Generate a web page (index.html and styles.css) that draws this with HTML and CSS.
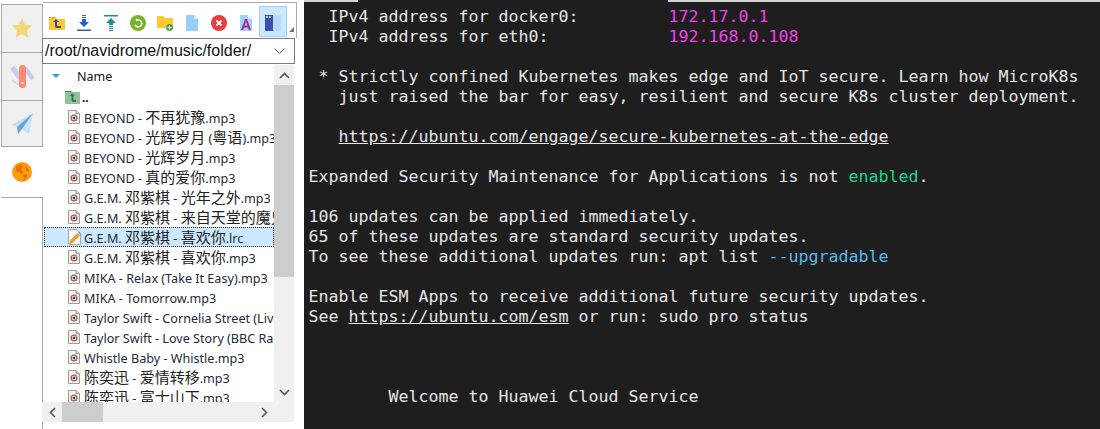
FILE: index.html
```html
<!DOCTYPE html>
<html lang="zh">
<head>
<meta charset="utf-8">
<title>Terminal</title>
<link rel="stylesheet" href="styles.css">
</head>
<body>
<svg class="defs" width="0" height="0" aria-hidden="true">
  <symbol id="mp3" viewBox="0 0 12 14">
    <path d="M.5.5h7.500l3.500 3v10h-11z" fill="#f2f2f2" stroke="#9a9a9a"/>
    <path d="M8 .5v3h3.500" fill="#ddd" stroke="#9a9a9a"/>
    <circle cx="6" cy="8" r="3.500" fill="#a8604a"/>
    <circle cx="6" cy="8" r="2.200" fill="#e8e4e0"/>
    <circle cx="6" cy="8" r="1.200" fill="#2f2f3a"/>
  </symbol>
</svg>
<div class="app">
  <nav class="side">
    <div class="tab">
      <svg width="22" height="21" viewBox="0 0 24 23"><path d="M12 0l3.300 7.400 8 .8-6 5.400 1.700 7.900-7-4.100-7 4.100 1.700-7.900-6-5.400 8-.8z" fill="#f2d777"/></svg>
    </div>
    <div class="tab">
      <svg width="23" height="23" viewBox="0 0 23 23"><path d="M1 2l8 11" stroke="#c8cdf0" stroke-width="5"/><path d="M1 15l7 5" stroke="#d4d8f2" stroke-width="2"/><path d="M14 3l8 11" stroke="#c8cdf0" stroke-width="4.500"/><rect x="8" y="0" width="7" height="23" rx="3.500" fill="#f98b70"/><circle cx="11.500" cy="18" r="1" fill="#fff"/></svg>
    </div>
    <div class="tab">
      <svg width="22" height="22" viewBox="0 0 22 22"><path d="M22 0L0 12l6 2z" fill="#bfe0f8"/><path d="M22 0L9 15l9 6z" fill="#c5e3fa"/><path d="M22 0L6 14l1 7 4-5z" fill="#6f9fd8"/></svg>
    </div>
    <div class="tab tab-on">
      <svg width="20" height="20" viewBox="0 0 20 20"><circle cx="10" cy="10" r="10" fill="#ff9a0a"/><path d="M4 4l5-2 2 3-2 3 2 2-1 3-3-3-3-1zM13 4l3 2 1 4-3-1zM11 13l4-1 0 3-3 3z" fill="#e27400"/></svg>
    </div>
    <div class="side-rest"></div>
  </nav>
  <section class="panel">
    <div class="toolbar">
      <span class="tool"><svg width="16" height="14" viewBox="0 0 16 14"><path d="M0 1h6l2 2h8v11H0z" fill="#fdc832"/><path d="M0 1h6l1 1H0z" fill="#e6a81a"/><path d="M7 3L4 6h2v4q0 2 2 2h4v-2H8V6h2z" fill="#3a4c9c"/></svg></span>
      <span class="tool"><svg width="14" height="16" viewBox="0 0 14 16"><path d="M5 0h4v1H5zM5 2h4v1H5zM5 4h4v3h3l-5 5-5-5h3z" fill="#2263c9"/><path d="M0 14.500h14v1.500H0z" fill="#2263c9"/></svg></span>
      <span class="tool"><svg width="14" height="16" viewBox="0 0 14 16"><path d="M0 0h14v1.500H0z" fill="#13958c"/><path d="M7 3l5 5H9v2H5V8H2zM5 11h4v1H5zM5 13h4v1H5zM5 15h4v1H5z" fill="#13958c"/></svg></span>
      <span class="tool"><svg width="16" height="16" viewBox="0 0 16 16"><circle cx="8" cy="8" r="8" fill="#77b32a"/><path d="M8 3.500v1.500a3.500 3.500 0 1 1-3.500 3.500" transform="rotate(-25 8 8)" fill="none" stroke="#fff" stroke-width="1.500"/></svg></span>
      <span class="tool"><svg width="16" height="16" viewBox="0 0 16 16"><path d="M0 1h6l2 2h8v10H0z" fill="#fdc832"/><circle cx="12.500" cy="12.500" r="3.500" fill="#4fa04a"/><path d="M10.500 12.500h4M12.500 10.500v4" stroke="#fff"/></svg></span>
      <span class="tool"><svg width="12" height="16" viewBox="0 0 12 16"><path d="M0 0h8l4 4v12H0z" fill="#99cdfb"/><path d="M8 0l4 4H8z" fill="#dceefd"/></svg></span>
      <span class="tool"><svg width="16" height="16" viewBox="0 0 16 16"><circle cx="8" cy="8" r="8" fill="#ec3a3e"/><path d="M5.500 5.500l5 5M10.500 5.500l-5 5" stroke="#fff" stroke-width="1.800"/></svg></span>
      <span class="tool"><svg width="12" height="16" viewBox="0 0 12 16"><path d="M0 0h8l4 4v12H0z" fill="#a5d1f8"/><path d="M8 0l4 4H8z" fill="#e2f0fd"/><path d="M1 15L5 4h2l4 11H8.800L8 12.500H4L3.200 15zM4.700 10.500h2.600L6 6.500z" fill="#9c2aa5"/></svg></span>
      <span class="tool tool-on"><svg width="16" height="16" viewBox="0 0 16 16"><path d="M0 0h8v16H0z" fill="#3b4fb0"/><path d="M8 0h8v16H8z" fill="#b6d9f5"/><path d="M1 1h2v2H1z" fill="#9fd0f0"/><path d="M4 1h2v2H4z" fill="#d6c64a"/></svg></span>
      <span class="grip"></span>
    </div>
    <div class="combo">
      <span class="combo-text">/root/navidrome/music/folder/</span>
      <svg width="11" height="6" viewBox="0 0 11 6"><path d="M.5.500l5 5 5-5" fill="none" stroke="#555"/></svg>
    </div>
    <div class="browser">
      <div class="list">
        <div class="head"><span class="sort"></span><span>Name</span></div>
        <div class="row"><svg class="ico" width="15" height="14" viewBox="0 0 15 14"><path d="M0 1h6l1 1h8v12H0z" fill="#8fc48f"/><path d="M0 1h6l1 1H0z" fill="#1f9a36"/><path d="M7 3L5 6h1.500v4q0 2 2 2H11v-2H8.500V6H10z" fill="#3a6a8c"/></svg><span class="up">..</span></div>
        <div class="row"><svg class="ico"><use href="#mp3"/></svg><span class="name">BEYOND - <b>不再犹豫</b>.mp3</span></div>
        <div class="row"><svg class="ico"><use href="#mp3"/></svg><span class="name">BEYOND - <b>光辉岁月</b> (<b>粤语</b>).mp3</span></div>
        <div class="row"><svg class="ico"><use href="#mp3"/></svg><span class="name">BEYOND - <b>光辉岁月</b>.mp3</span></div>
        <div class="row"><svg class="ico"><use href="#mp3"/></svg><span class="name">BEYOND - <b>真的爱你</b>.mp3</span></div>
        <div class="row"><svg class="ico"><use href="#mp3"/></svg><span class="name">G.E.M. <b>邓紫棋</b> - <b>光年之外</b>.mp3</span></div>
        <div class="row"><svg class="ico"><use href="#mp3"/></svg><span class="name">G.E.M. <b>邓紫棋</b> - <b>来自天堂的魔鬼</b>.mp3</span></div>
        <div class="row row-on"><svg class="ico ico-lrc" viewBox="0 0 13 16"><path d="M.5.500h8l4 4v11h-12z" fill="#f8f8f8" stroke="#a5a5a5"/><path d="M1 15.500l1.500-4.500 7-7 2.500 2.500-7 7z" fill="#f09a30"/><path d="M10 3.500l2.500 2.500 .5-1-2-2z" fill="#4a90d9"/></svg><span class="name">G.E.M. <b>邓紫棋</b> - <b>喜欢你</b>.lrc</span></div>
        <div class="row"><svg class="ico"><use href="#mp3"/></svg><span class="name">G.E.M. <b>邓紫棋</b> - <b>喜欢你</b>.mp3</span></div>
        <div class="row"><svg class="ico"><use href="#mp3"/></svg><span class="name">MIKA - Relax (Take It Easy).mp3</span></div>
        <div class="row"><svg class="ico"><use href="#mp3"/></svg><span class="name">MIKA - Tomorrow.mp3</span></div>
        <div class="row"><svg class="ico"><use href="#mp3"/></svg><span class="name">Taylor Swift - Cornelia Street (Live).mp3</span></div>
        <div class="row"><svg class="ico"><use href="#mp3"/></svg><span class="name">Taylor Swift - Love Story (BBC Radio).mp3</span></div>
        <div class="row"><svg class="ico"><use href="#mp3"/></svg><span class="name">Whistle Baby - Whistle.mp3</span></div>
        <div class="row"><svg class="ico"><use href="#mp3"/></svg><span class="name"><b>陈奕迅</b> - <b>爱情转移</b>.mp3</span></div>
        <div class="row"><svg class="ico"><use href="#mp3"/></svg><span class="name"><b>陈奕迅</b> - <b>富士山下</b>.mp3</span></div>
      </div>
      <div class="vbar">
        <span class="sb-btn"><svg width="11" height="7" viewBox="0 0 11 7"><path d="M1 6l4.500-4.500L10 6" fill="none" stroke="#555" stroke-width="1.600"/></svg></span>
        <span class="vthumb"></span>
        <span class="vgap"></span>
        <span class="sb-btn"><svg width="11" height="7" viewBox="0 0 11 7"><path d="M1 1l4.500 4.500L10 1" fill="none" stroke="#555" stroke-width="1.600"/></svg></span>
      </div>
      <div class="hbar">
        <span class="sb-btn sb-h"><svg width="7" height="11" viewBox="0 0 7 11"><path d="M6 1L1.500 5.500 6 10" fill="none" stroke="#555" stroke-width="1.600"/></svg></span>
        <span class="hthumb"></span>
        <span class="hgap"></span>
        <span class="sb-btn sb-h"><svg width="7" height="11" viewBox="0 0 7 11"><path d="M1 1l4.500 4.500L1 10" fill="none" stroke="#555" stroke-width="1.600"/></svg></span>
      </div>
      <div class="corner"></div>
    </div>
  </section>
  <main class="term">
<div class="edge"><span class="edge-a"></span><span class="edge-gap"></span><span class="edge-b"></span></div>
<div class="line">  IPv4 address for docker0:         <span class="mag">172.17.0.1</span></div>
<div class="line">  IPv4 address for eth0:            <span class="mag">192.168.0.108</span></div>
<div class="line"> </div>
<div class="line"> * Strictly confined Kubernetes makes edge and IoT secure. Learn how MicroK8s</div>
<div class="line">   just raised the bar for easy, resilient and secure K8s cluster deployment.</div>
<div class="line"> </div>
<div class="line">   <span class="ul">https://ubuntu.com/engage/secure-kubernetes-at-the-edge</span></div>
<div class="line"> </div>
<div class="line">Expanded Security Maintenance for Applications is not <span class="grn">enabled</span>.</div>
<div class="line"> </div>
<div class="line">106 updates can be applied immediately.</div>
<div class="line">65 of these updates are standard security updates.</div>
<div class="line">To see these additional updates run: apt list <span class="blu">--upgradable</span></div>
<div class="line"> </div>
<div class="line">Enable ESM Apps to receive additional future security updates.</div>
<div class="line">See <span class="ul">https://ubuntu.com/esm</span> or run: sudo pro status</div>
<div class="line"> </div>
<div class="line"> </div>
<div class="line"> </div>
<div class="line">        Welcome to Huawei Cloud Service</div>
  </main>
</div>
</body>
</html>
```
FILE: styles.css
```css
* { box-sizing: border-box; }
html, body { margin: 0; height: 100%; background: #fff; overflow: hidden; }
.defs { position: absolute; }
.app { display: flex; width: 1100px; height: 429px; }

.side { width: 43px; flex: none; padding-top: 4px; padding-left: 1px; display: flex; flex-direction: column; }
.tab { width: 42px; height: 48px; flex: none; display: flex; align-items: center; justify-content: center; background: #f0f0f0; border: 1px solid #a9a9a9; border-bottom: 0; }
.tab:nth-child(3) { height: 47px; border-bottom: 1px solid #a9a9a9; }
.tab-on { height: 50px; background: #fff; border: 0; }
.side-rest { flex: 1; border-top: 1px solid #a9a9a9; border-right: 1px solid #a9a9a9; }

.panel { width: 254px; flex: none; display: flex; flex-direction: column; margin-top: 2px; border-top: 1px solid #a9a9a9; }
.toolbar { height: 35px; padding: 3px 0 0 0; display: flex; border-right: 1px solid #a9a9a9; }
.tool { width: 27px; height: 29px; display: flex; align-items: center; justify-content: center; padding-top: 4px; flex: none; }
.tool-on { width: 28px; background: #cce8ff; border: 1px solid #99d1ff; height: 31px; padding-top: 3px; }
.grip { width: 0; height: 0; margin: 21px 0 0 2px; border-style: solid; border-width: 0 0 5px 5px; border-color: transparent transparent #5f7a8a transparent; }

.combo { height: 26px; margin-left: -1px; width: 253px; display: flex; align-items: center; justify-content: space-between; padding: 0 9px 0 2px; border: 1px solid #7a7a7a; background: #fff; }
.combo-text { font: 16px "Liberation Sans", Arial, sans-serif; color: #111; }

.browser { display: grid; grid-template-columns: 232px 20px; grid-template-rows: 337px 20px; margin-top: 1px; margin-left: -1px; }
.list { overflow: hidden; padding-left: 2px; }
.head { height: 22px; padding-left: 8px; display: flex; align-items: center; font: 12.5px "Noto Sans", sans-serif; color: #111; }
.sort { width: 0; height: 0; margin-right: 17px; border-style: solid; border-width: 4px 4px 0 4px; border-color: #3a9be8 transparent transparent transparent; }
.row { height: 20px; padding-left: 24px; display: flex; align-items: center; white-space: nowrap; overflow: hidden; }
.row .ico { width: 12px; height: 14px; flex: none; margin-right: 4px; }
.row .ico-lrc { width: 13px; height: 16px; margin-right: 3px; }
.row:nth-child(2) .ico { width: 15px; height: 14px; margin-right: 2px; margin-left: -3px; }
.name { align-self: flex-start; font: 12.6px/24px "Noto Sans", sans-serif; color: #1c2a3a; }
.name b { font: 15px/1 "Noto Sans CJK SC", sans-serif; color: #222; }
.up { font: 12px "Noto Sans", sans-serif; color: #111; font-weight: 700; }
.row-on { background: #cce8ff; outline: 1px dotted #222; outline-offset: -1px; }

.vbar { background: #f0f0f0; display: flex; flex-direction: column; }
.hbar { background: #f0f0f0; display: flex; }
.corner { background: #f0f0f0; }
.sb-btn { width: 20px; height: 20px; flex: none; display: flex; align-items: center; justify-content: center; }
.vthumb { width: 20px; height: 192px; background: #cdcdcd; flex: none; }
.vgap { flex: 1; }
.hthumb { width: 41px; height: 20px; background: #cdcdcd; flex: none; }
.hgap { flex: 1; }

.term { flex: 1; margin-left: 7px; padding: 0 0 0 4.500px; background: #1e1e1e; color: #e6e6e6; font: 16.62px/20px "DejaVu Sans Mono", monospace; overflow: hidden; }
.edge { display: flex; height: 7px; margin-left: -4.500px; }
.edge-a { width: 54px; height: 2px; background: #d4d4d4; }
.edge-gap { width: 310px; }
.edge-b { flex: 1; height: 2px; background: #d4d4d4; }
.line { height: 20px; white-space: pre; }
.mag { color: #f040e8; }
.grn { color: #23d18b; }
.blu { color: #5cb8e8; }
.ul { text-decoration: underline; }
```
